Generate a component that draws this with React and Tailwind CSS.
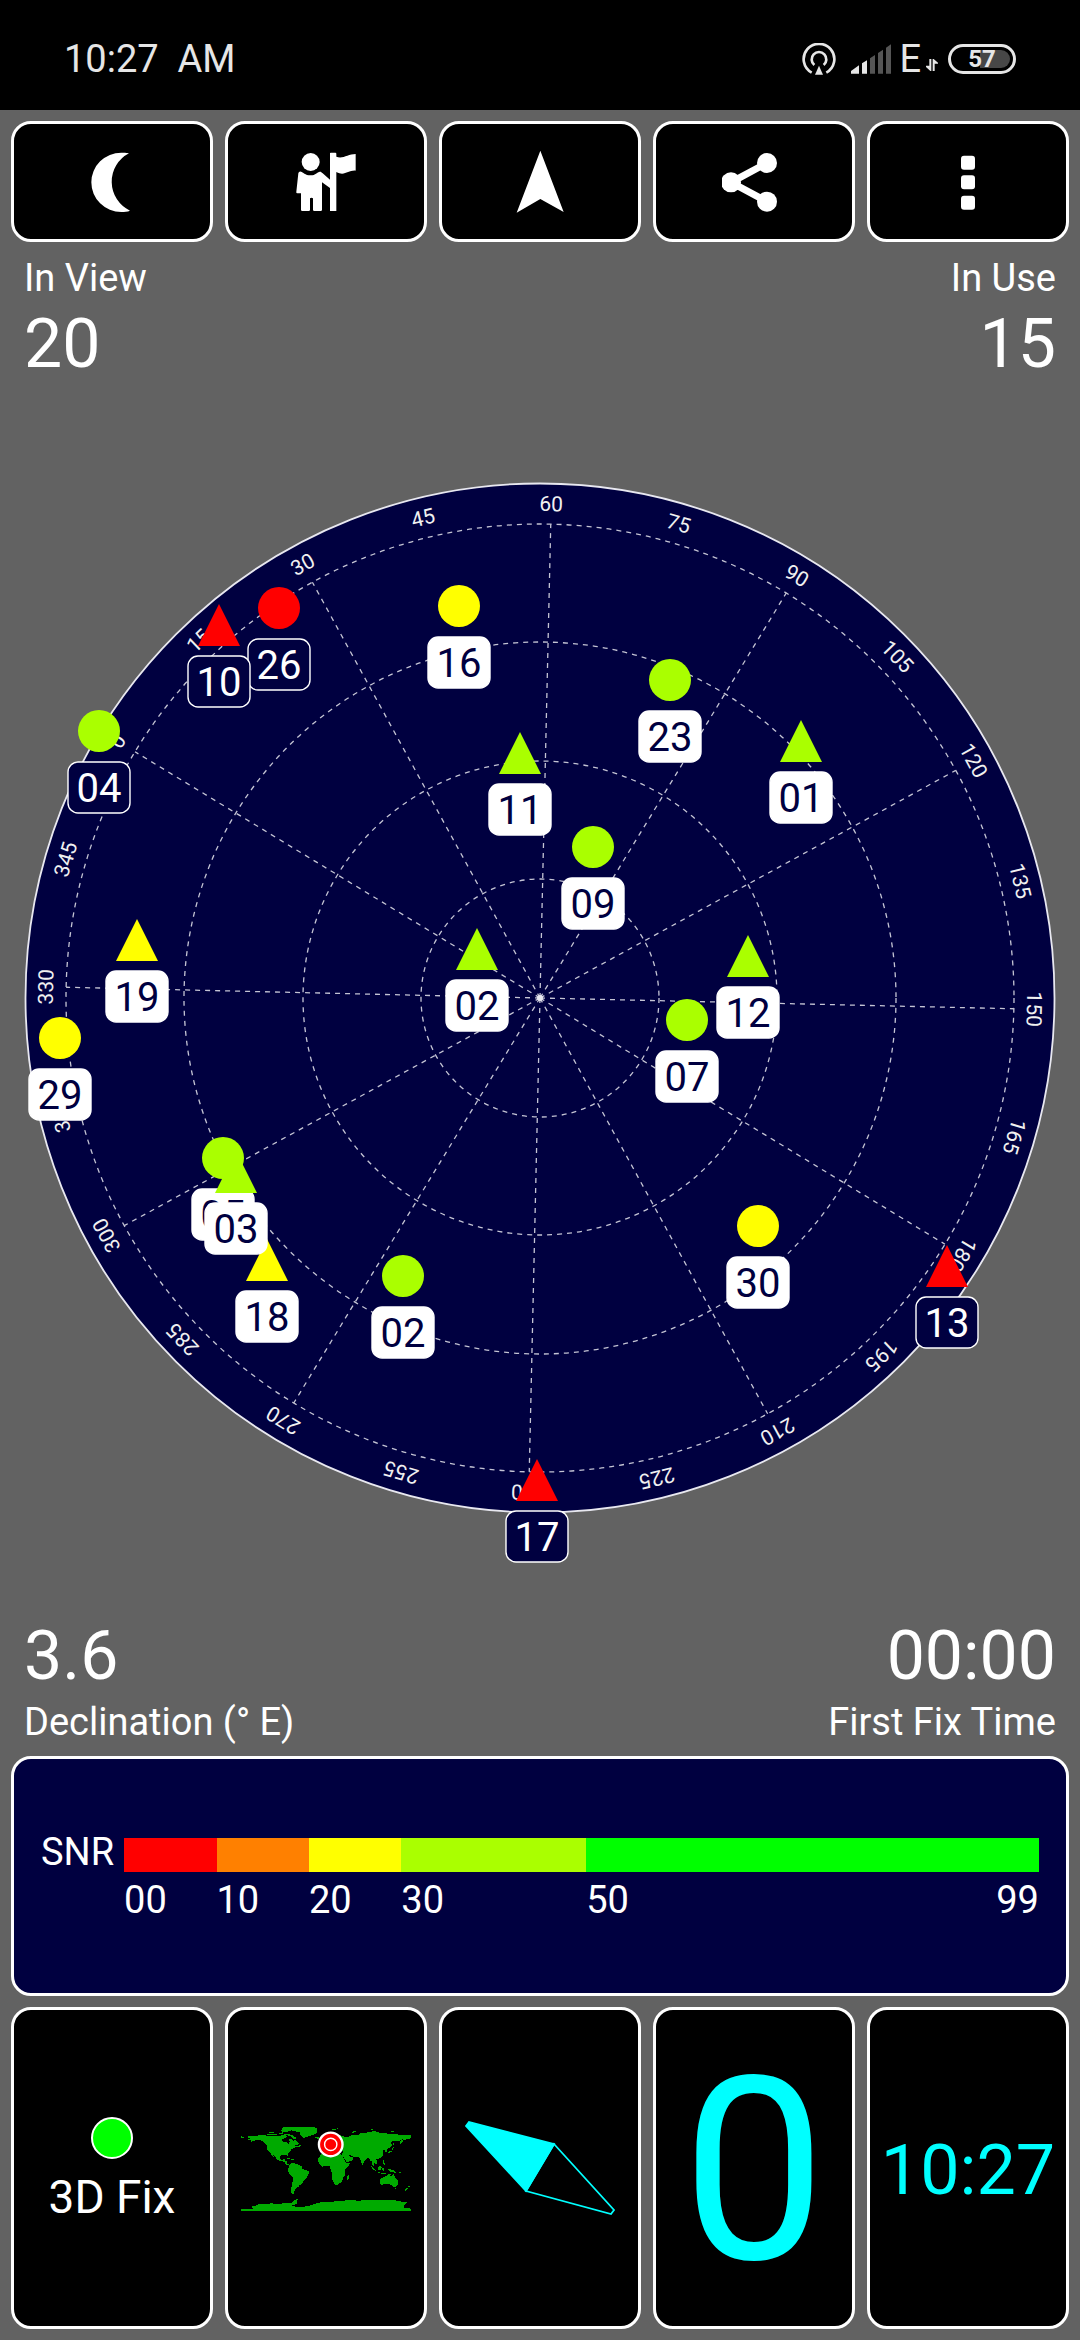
import React from 'react';

const HEADING = 1.3;
const CENTER = { x: 540, y: 540 };
const RINGS = [119, 237, 356, 474];
const SPOKES = Array.from({ length: 12 }, (_, i) => i * 30);
const BEARINGS = Array.from({ length: 24 }, (_, i) => i * 15);

const LIME = '#aaff00';
const YELLOW = '#ffff00';
const RED = '#ff0000';

// drawn in order, later ones lie on top
const satellites = [
  { id: '26', shape: 'circle', x: 279, y: 150, color: RED, used: false },
  { id: '10', shape: 'triangle', x: 219, y: 167, color: RED, used: false },
  { id: '16', shape: 'circle', x: 459, y: 148, color: YELLOW, used: true },
  { id: '04', shape: 'circle', x: 99, y: 273, color: LIME, used: false },
  { id: '11', shape: 'triangle', x: 520, y: 295, color: LIME, used: true },
  { id: '19', shape: 'triangle', x: 137, y: 482, color: YELLOW, used: true },
  { id: '02', shape: 'triangle', x: 477, y: 491, color: LIME, used: true },
  { id: '23', shape: 'circle', x: 670, y: 222, color: LIME, used: true },
  { id: '01', shape: 'triangle', x: 801, y: 283, color: LIME, used: true },
  { id: '09', shape: 'circle', x: 593, y: 389, color: LIME, used: true },
  { id: '12', shape: 'triangle', x: 748, y: 498, color: LIME, used: true },
  { id: '29', shape: 'circle', x: 60, y: 580, color: YELLOW, used: true },
  { id: '07', shape: 'circle', x: 687, y: 562, color: LIME, used: true },
  { id: '18', shape: 'triangle', x: 267, y: 802, color: YELLOW, used: true },
  { id: '05', shape: 'circle', x: 223, y: 700, color: LIME, used: true },
  { id: '03', shape: 'triangle', x: 236, y: 714, color: LIME, used: true },
  { id: '02', shape: 'circle', x: 403, y: 818, color: LIME, used: true },
  { id: '30', shape: 'circle', x: 758, y: 768, color: YELLOW, used: true },
  { id: '13', shape: 'triangle', x: 947, y: 808, color: RED, used: false },
  { id: '17', shape: 'triangle', x: 537, y: 1022, color: RED, used: false },
];

const StatusBar = () => (
  <header className="flex h-[110px] items-center justify-between bg-black px-16 pt-2 text-[#e6e6e6]">
    <span className="text-[38px] leading-[44px]">10:27&nbsp; AM</span>
    <div className="flex items-center">
      <svg className="h-8 w-[34px]" viewBox="0 0 102 96" fill="none">
        <path d="M29 89A46 46 0 1 1 73 89" stroke="#e6e6e6" strokeWidth="8" />
        <path d="M37 66A22 22 0 1 1 65 66" stroke="#e6e6e6" strokeWidth="8" />
        <path d="M51 68L63 95H39Z" fill="#e6e6e6" />
      </svg>
      <svg className="ml-[15px] h-[30px] w-10" viewBox="0 0 120 90">
        <path d="M0 89V81L24 64V89ZM33 89V58L48 49V89Z" fill="#e6e6e6" />
        <path
          d="M57 89V43L72 33V89ZM81 89V27L96 17V89ZM105 89V11L120 1V89Z"
          fill="#555555"
        />
      </svg>
      <span className="ml-2 text-[38px] leading-[44px]">E</span>
      <svg className="ml-[5px] mt-3 h-3 w-3" viewBox="0 0 36 36" fill="#e6e6e6">
        <path d="M10 0H16V36H13L0 24V20H10ZM20 36H26V14H36V11L23 0H20Z" />
      </svg>
      <div className="relative ml-[10px] flex h-[30px] w-[68px] items-center justify-center rounded-full border-[3px] border-[#e6e6e6]">
        <div className="absolute inset-y-[3px] left-[29px] right-[3px] rounded-r-full bg-[#474747]" />
        <span className="relative text-2xl font-bold leading-6">57</span>
      </div>
    </div>
  </header>
);

const ToolButton = ({ label, children }) => (
  <button
    aria-label={label}
    className="flex h-[121px] items-center justify-center rounded-[20px] border-[3px] border-white bg-black"
  >
    <svg className="h-16 w-16" viewBox="0 0 192 192" fill="white">
      {children}
    </svg>
  </button>
);

const Toolbar = () => (
  <nav className="grid grid-cols-5 gap-3">
    <ToolButton label="Night mode">
      <path d="M147 10C138 8 130 8 124 8A90 89 0 0 0 124 186C134 186 142 185 150 182A96 96 0 0 1 147 10Z" />
    </ToolButton>
    <ToolButton label="Guide">
      <circle cx="50" cy="36" r="27" />
      <path d="M21 65C27 66 33 76 50 76C65 76 69 66 78 65C81 65 83 67 86 70L108 89V114L84 97V179Q84 183 80 183H61Q57 183 57 179V145Q52 141 48 145V179Q48 183 44 183H25Q21 183 21 179V130H10Q6 130 7 125L13 70Q14 64 21 65Z" />
      <path d="M108 10Q108 8 110 8H124Q127 8 127 11V20C146 28 162 12 185 12V62C162 60 152 80 127 66V183H108Z" />
    </ToolButton>
    <ToolButton label="Compass">
      <path d="M97 2L167 186L97 147L26 188Z" />
    </ToolButton>
    <ToolButton label="Share">
      <path d="M135 39L27 97L135 155" fill="none" stroke="white" strokeWidth="21" />
      <circle cx="27" cy="97" r="30" />
      <circle cx="135" cy="39" r="30" />
      <circle cx="135" cy="155" r="30" />
    </ToolButton>
    <ToolButton label="More">
      <rect x="75" y="17" width="42" height="42" rx="9" />
      <rect x="75" y="76" width="42" height="42" rx="9" />
      <rect x="75" y="137" width="42" height="42" rx="9" />
    </ToolButton>
  </nav>
);

const Stat = ({ label, value, right, below }) => (
  <div className={`flex ${below ? 'flex-col-reverse' : 'flex-col'} ${right ? 'items-end' : 'items-start'}`}>
    <span className="text-[38px] leading-[48px]">{label}</span>
    <span className="text-[68px] leading-[84px]">{value}</span>
  </div>
);

const Satellite = ({ sat }) => (
  <g transform={`translate(${sat.x} ${sat.y})`}>
    {sat.shape === 'circle' ? (
      <circle r="21" fill={sat.color} />
    ) : (
      <path d="M0 -21L21 21H-21Z" fill={sat.color} />
    )}
    <rect
      x="-31"
      y="31"
      width="62"
      height="51"
      rx="10"
      fill={sat.used ? 'white' : '#000040'}
      stroke="white"
      strokeWidth="1.4"
    />
    <text y="71" textAnchor="middle" fontSize="40" fill={sat.used ? '#000040' : 'white'}>
      {sat.id}
    </text>
  </g>
);

const SkyPlot = () => (
  <svg className="block w-full overflow-visible" viewBox="0 0 1080 1080">
    <g transform={`translate(${CENTER.x} ${CENTER.y})`}>
      <circle r="514.5" fill="#000040" stroke="#e8e8f0" strokeWidth="1.8" />
      <g fill="none" stroke="#c4c4d4" strokeWidth="1.3" strokeDasharray="5 5">
        {RINGS.map((r) => (
          <circle key={r} r={r} />
        ))}
        {SPOKES.map((deg) => (
          <path key={deg} d="M0 0V-474" transform={`rotate(${deg + HEADING})`} />
        ))}
      </g>
      <circle r="3" fill="#e8e8f0" />
      {BEARINGS.map((deg) => (
        <text
          key={deg}
          y="-487"
          textAnchor="middle"
          fontSize="21"
          fill="#f0f0f0"
          transform={`rotate(${deg - 60 + HEADING})`}
        >
          {deg}
        </text>
      ))}
    </g>
    {satellites.map((sat) => (
      <Satellite key={sat.shape + sat.id} sat={sat} />
    ))}
  </svg>
);

const SnrPanel = () => (
  <section className="flex h-[240px] items-center rounded-[20px] border-[3px] border-white bg-[#000040] px-[27px] text-[38px] leading-10">
    <div className="grid w-full grid-cols-[auto_1fr] items-end gap-x-[10px] gap-y-2">
      <span>SNR</span>
      <div className="grid h-[34px] grid-cols-[10fr_10fr_10fr_20fr_49fr]">
        <div className="bg-[#ff0000]" />
        <div className="bg-[#ff8000]" />
        <div className="bg-[#ffff00]" />
        <div className="bg-[#aaff00]" />
        <div className="bg-[#00ff00]" />
      </div>
      <div className="col-start-2 grid grid-cols-[10fr_10fr_10fr_20fr_49fr]">
        <span>00</span>
        <span>10</span>
        <span>20</span>
        <span>30</span>
        <div className="flex justify-between">
          <span>50</span>
          <span>99</span>
        </div>
      </div>
    </div>
  </section>
);

const Tile = ({ children }) => (
  <div className="flex h-[322px] min-w-0 flex-col items-center justify-center overflow-hidden rounded-[20px] border-[3px] border-white bg-black">
    {children}
  </div>
);

// equirectangular, x = longitude, y = -latitude
const WorldMap = () => (
  <svg className="h-[85px] w-[170px]" viewBox="-180 -90 360 180">
    <g fill="#00aa00" shapeRendering="crispEdges">
      {/* north america */}
      <path d="M-166 -69L-140 -70L-128 -70L-115 -69L-95 -69L-94 -72L-85 -70L-82 -67L-87 -64L-94 -61L-94 -58L-88 -56L-82 -55L-80 -51L-78 -54L-77 -57L-78 -62L-73 -62L-69 -59L-65 -60L-61 -56L-56 -52L-60 -50L-66 -50L-65 -48L-54 -49L-53 -47L-60 -46L-66 -44L-70 -43L-74 -40L-76 -36L-81 -31L-80 -25L-83 -29L-90 -29L-97 -27L-97 -22L-94 -18L-91 -19L-87 -21L-88 -16L-83 -15L-83 -10L-79 -9L-77 -8L-80 -7L-85 -9L-88 -13L-94 -16L-97 -16L-105 -20L-107 -24L-113 -31L-110 -23L-116 -29L-118 -34L-124 -40L-124 -48L-130 -54L-135 -58L-140 -60L-148 -60L-154 -58L-162 -55L-157 -59L-165 -61L-161 -64L-166 -65Z" />
      <path d="M-180 -70L-176 -67L-171 -66L-176 -65L-180 -65Z" />
      {/* arctic islands */}
      <path d="M-125 -72L-118 -74L-112 -73L-103 -73L-104 -70L-115 -70L-122 -71ZM-124 -76L-112 -77L-108 -75L-118 -75ZM-100 -74L-92 -77L-88 -75L-96 -73ZM-90 -74L-80 -73L-72 -71L-66 -67L-62 -65L-66 -62L-72 -64L-74 -68L-82 -70L-90 -72ZM-96 -79L-92 -87L-64 -87L-66 -84L-76 -79L-88 -77Z" />
      {/* greenland and iceland */}
      <path d="M-73 -79L-70 -87L-45 -87L-30 -89L-20 -86L-19 -78L-22 -73L-32 -70L-40 -67L-46 -65L-50 -66L-54 -72L-56 -77L-68 -79ZM-24 -66L-14 -66L-16 -63L-22 -64Z" />
      {/* caribbean */}
      <path d="M-85 -22L-80 -23L-74 -20L-78 -20ZM-74 -20L-68 -20L-68 -18L-74 -18ZM-67 -19H-64V-17H-67Z" />
      {/* south america */}
      <path d="M-77 -8L-72 -12L-62 -10L-52 -5L-50 0L-44 3L-35 6L-35 9L-39 14L-40 20L-48 26L-49 30L-54 34L-58 35L-57 38L-62 39L-63 42L-66 45L-68 50L-69 55L-74 52L-75 46L-73 40L-71 30L-70 20L-76 14L-80 6L-80 0Z" />
      {/* africa */}
      <path d="M-17 -15L-17 -21L-10 -30L-5 -36L10 -37L11 -33L20 -31L32 -31L35 -26L38 -20L43 -12L51 -12L48 -5L40 3L40 15L35 20L35 25L31 30L25 34L19 35L15 28L12 17L13 10L9 0L9 -4L4 -6L-8 -4L-13 -8ZM44 17L49 12L50 16L47 25L44 24Z" />
      {/* europe and asia */}
      <path d="M-10 -37L-9 -43L-1 -44L-4 -48L4 -52L9 -54L10 -57L14 -54L21 -55L24 -59L30 -60L22 -61L22 -64L25 -66L20 -63L17 -57L13 -56L6 -58L5 -62L15 -69L28 -71L41 -67L34 -66L44 -66L54 -70L68 -71L72 -75L80 -75L95 -78L105 -79L113 -76L130 -74L140 -74L160 -71L180 -71L180 -65L177 -63L164 -60L163 -56L157 -51L156 -57L163 -62L155 -59L142 -59L136 -54L141 -52L139 -47L132 -43L128 -39L129 -35L126 -35L125 -39L121 -40L118 -39L122 -37L119 -35L122 -31L119 -25L111 -21L106 -20L109 -12L105 -9L100 -13L103 -2L98 -8L98 -16L94 -16L91 -22L87 -21L80 -15L79 -9L77 -8L73 -18L72 -21L67 -25L58 -25L52 -28L48 -30L52 -24L59 -23L55 -17L44 -13L39 -21L34 -28L36 -36L27 -37L27 -40L23 -37L19 -41L13 -45L18 -40L15 -38L9 -44L3 -43L-1 -37Z" />
      {/* islands of the pacific and the north */}
      <path d="M-6 -50L1 -51L-2 -56L-5 -58ZM10 -82L25 -85L20 -81ZM52 -74L56 -78L67 -80L58 -76ZM92 -84L102 -84L98 -82ZM138 -79L148 -78L140 -77ZM130 -32L136 -34L140 -36L141 -41L145 -44L141 -45L139 -38L132 -35ZM142 -47L144 -54L142 -54ZM120 -18H123L122 -13L126 -8L123 -7L120 -13ZM95 -5L99 -3L106 4L105 6L98 0ZM105 7L115 8V9L106 8ZM109 -1L117 -7L118 -2L115 4L110 3ZM119 0L124 -1L122 1L123 5H120ZM131 1L141 3L148 7L150 10L143 8L138 8L133 4ZM117 9H126V11H117ZM80 -9L82 -7L80 -6ZM152 4L156 7L160 10H156Z" />
      {/* australia and new zealand */}
      <path d="M114 22L122 18L129 15L131 12L137 12L136 15L140 17L142 11L146 18L153 26L153 31L150 38L144 39L138 35L132 32L124 33L116 35L114 30ZM145 41H148L147 44ZM173 35L178 38L175 41ZM172 41L174 42L168 47L166 46Z" />
      {/* antarctica */}
      <path d="M-180 85L-155 85L-158 81L-148 78L-140 75L-115 74L-100 75L-85 73L-72 73L-68 68L-58 63L-62 69L-62 75L-75 79L-55 82L-35 79L-20 74L-10 71L15 70L35 69L50 66L60 67L70 69L80 66L100 66L125 66L145 67L160 70L172 72L165 78L165 83L180 85V90H-180Z" />
    </g>
    <g transform="translate(10 -51)" fill="none" stroke="white">
      <circle r="25" fill="#ff0000" strokeWidth="5" />
      <circle r="13" strokeWidth="3" />
    </g>
  </svg>
);

const App = () => (
  <div className="flex min-h-screen flex-col bg-[#626262] font-[Roboto,sans-serif] text-white">
    <StatusBar />
    <main className="flex flex-1 flex-col py-[11px]">
      <div className="px-[11px]">
        <Toolbar />
      </div>
      <div className="mt-3 flex justify-between px-6">
        <Stat label="In View" value="20" />
        <Stat label="In Use" value="15" right />
      </div>
      <div className="flex flex-1 items-center pb-1">
        <SkyPlot />
      </div>
      <div className="mb-[10px] flex justify-between px-6">
        <Stat label="Declination (° E)" value="3.6" below />
        <Stat label="First Fix Time" value="00:00" right below />
      </div>
      <div className="flex flex-col gap-[11px] px-[11px]">
        <SnrPanel />
        <div className="grid grid-cols-5 gap-3">
          <Tile>
            <div className="mb-3 mt-1 h-[42px] w-[42px] rounded-full border-2 border-white bg-[#00ff00]" />
            <span className="text-[46px] leading-[52px]">3D Fix</span>
          </Tile>
          <Tile>
            <WorldMap />
          </Tile>
          <Tile>
            <svg className="h-[200px] w-[200px] shrink-0" viewBox="0 0 200 200" stroke="#00ffff" strokeWidth="1.8">
              <path d="M26 58L29 54L114 76L86 123Z" fill="#00ffff" />
              <path d="M114 76L174 142L171 146L86 123Z" fill="none" />
            </svg>
          </Tile>
          <Tile>
            <span className="pt-2 text-[256px] leading-none text-[#00ffff]">0</span>
          </Tile>
          <Tile>
            <span className="pt-1 text-[70px] leading-[84px] text-[#00ffff]">10:27</span>
          </Tile>
        </div>
      </div>
    </main>
  </div>
);

export default App;
